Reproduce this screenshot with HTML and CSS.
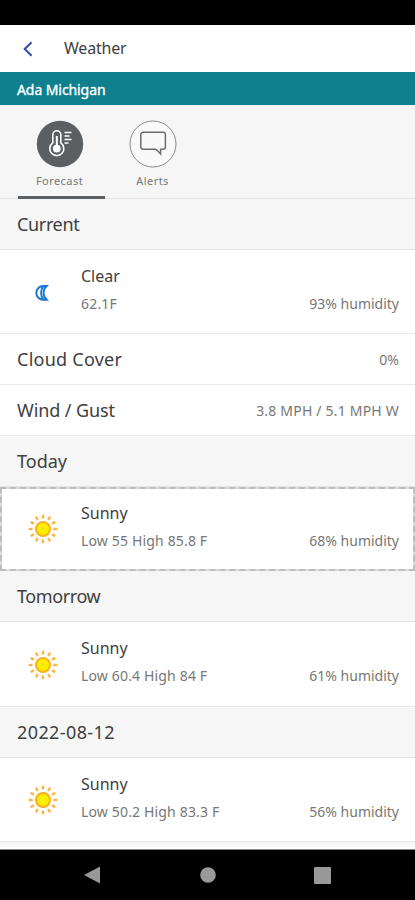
FILE: index.html
```html
<!DOCTYPE html>
<html lang="en">
<head>
<meta charset="utf-8">
<title>Weather</title>
<link rel="stylesheet" href="styles.css">
</head>
<body>
<svg class="defs" width="0" height="0">
  <symbol id="sun" viewBox="-15 -15 30 30">
    <g stroke="#fbb540" stroke-width="2.4">
      <path id="ray" d="M0-14.2V-10.4M0 14.2V10.4M-14.2 0H-10.4M14.2 0H10.4"/>
      <use href="#ray" transform="rotate(30)"/>
      <use href="#ray" transform="rotate(60)"/>
    </g>
    <circle r="7" fill="#ffee00" stroke="#fbb01c" stroke-width="2"/>
  </symbol>
</svg>
<div class="status"></div>
<header class="bar">
  <svg class="back" width="10" height="16" viewBox="0 0 10 16"><path d="M8.5 1.2L1.7 8L8.5 14.8" fill="none" stroke="#3449a8" stroke-width="2"/></svg>
  <h1 class="name">Weather</h1>
</header>
<div class="place"><span>Ada Michigan</span></div>
<nav class="tabs">
  <div class="tab active">
    <svg width="48" height="48" viewBox="0 0 48 48">
      <circle cx="24" cy="24" r="23.2" fill="#5b5f62"/>
      <g fill="none" stroke="#fff" stroke-width="1.6">
        <path d="M16.8 22.9V14.8a4 4 0 0 1 8 0V22.9a7 7 0 1 1-8 0Z"/>
        <path d="M20.8 16V27" stroke-width="2"/>
        <path d="M28.5 12.5H35.5M28.5 16H33.5M28.5 19.5H35.5M28.5 23H32.5" stroke-width="1.7"/>
      </g>
      <circle cx="20.8" cy="28.6" r="3.9" fill="#fff"/>
    </svg>
    <span class="label fc">Forecast</span>
  </div>
  <div class="tab">
    <svg width="48" height="48" viewBox="0 0 48 48">
      <circle cx="24" cy="24" r="23" fill="#f9f9f9" stroke="#85898b"/>
      <path d="M14 12.3H34.2a2.2 2.2 0 0 1 2.2 2.2V27a2.2 2.2 0 0 1-2.2 2.2H31.6V34L27 29.2H14a2.2 2.2 0 0 1-2.2-2.2V14.5a2.2 2.2 0 0 1 2.2-2.2Z" fill="none" stroke="#6b6e70" stroke-width="1.5"/>
    </svg>
    <span class="label al">Alerts</span>
  </div>
</nav>
<main>
  <h2 class="group"><span class="t-current">Current</span></h2>
  <section class="item">
    <svg class="icon" width="30" height="30" viewBox="-15 -15 30 30"><path d="M3.6-7H.2A6.9 6.9 0 0 0 .2 6.8H3.6C-.4 3.2-.4-3.4 3.6-7ZM.2-6.6C-2.6-3-2.6 2.8.2 6.4" fill="none" stroke="#1b76d1" stroke-width="1.9"/></svg>
    <div class="text"><b class="t-clear">Clear</b><p><span class="t-temp">62.1F</span><span class="hum">93% humidity</span></p></div>
  </section>
  <section class="line"><b class="t-cloud">Cloud Cover</b><span class="t-zero">0%</span></section>
  <section class="line"><b class="t-wind">Wind / Gust</b><span class="t-mph">3.8 MPH / 5.1 MPH W</span></section>
  <h2 class="group"><span class="t-today">Today</span></h2>
  <section class="item focus">
    <svg class="icon" width="30" height="30"><use href="#sun"/></svg>
    <div class="text"><b class="t-sunny">Sunny</b><p><span class="low">Low 55 High 85.8 F</span><span class="hum">68% humidity</span></p></div>
  </section>
  <h2 class="group"><span class="t-tom">Tomorrow</span></h2>
  <section class="item">
    <svg class="icon" width="30" height="30"><use href="#sun"/></svg>
    <div class="text"><b class="t-sunny">Sunny</b><p><span class="low">Low 60.4 High 84 F</span><span class="hum">61% humidity</span></p></div>
  </section>
  <h2 class="group"><span class="t-date">2022-08-12</span></h2>
  <section class="item">
    <svg class="icon" width="30" height="30"><use href="#sun"/></svg>
    <div class="text"><b class="t-sunny">Sunny</b><p><span class="low">Low 50.2 High 83.3 F</span><span class="hum">56% humidity</span></p></div>
  </section>
</main>
<footer class="sys">
  <svg width="17" height="18" viewBox="0 0 17 18"><path d="M0 9L16 .5V17.5Z" fill="#999"/></svg>
  <svg width="16" height="16" viewBox="0 0 16 16"><circle cx="8" cy="8" r="7.8" fill="#999"/></svg>
  <svg width="17" height="17" viewBox="0 0 17 17"><rect width="17" height="17" rx="1" fill="#999"/></svg>
</footer>
</body>
</html>
```
FILE: styles.css
```css
* { box-sizing: border-box; }
body {
  margin: 0; width: 415px; height: 900px; overflow: hidden;
  display: flex; flex-direction: column;
  background: #f6f6f6; color: #404040;
  font-family: "Noto Sans", sans-serif; white-space: nowrap;
}
h1, h2, p, b { margin: 0; font-weight: 400; }
.defs { position: absolute; }
.status { height: 25px; background: #000; }
.bar { height: 47px; background: #fff; display: flex; align-items: center; padding-left: 23px; }
.back { margin-top: 1px; }
.name { margin-left: 31px; font-size: 16px; line-height: 24px; letter-spacing: -.2px; margin-top: -2px; }
.place { height: 33px; background: #0f7f8d; color: #fff; padding: 0 17px; font-size: 14px; line-height: 35px; letter-spacing: -.08px; -webkit-text-stroke: .35px #fff; }
.tabs { height: 94px; padding: 15px 18px 0; display: flex; gap: 4px; border-bottom: 1px solid #e2e2e2; }
.tab { width: 87px; height: 79px; display: flex; flex-direction: column; align-items: center; border-bottom: 3px solid transparent; }
.tab.active { border-bottom-color: #5b5f62; padding-right: 4px; }
.tab svg { flex: none; }
.label { font-size: 11px; line-height: 16px; margin-top: 5px; color: #777; letter-spacing: .45px; }
.group { height: 51px; padding-left: 17px; font-size: 18px; line-height: 51px; border-bottom: 1px solid #e2e2e2; }
.item { height: 84.4px; display: flex; background: #fff; border-bottom: 1px solid #e9e9e9; padding: 0 16px 0 28px; }
.item.focus { border: 0; outline: 2px dashed #bdbdbd; outline-offset: -2px; box-shadow: inset 0 0 0 2px #dadada; }
.icon { margin-top: 27.5px; margin-left: -.3px; flex: none; }
.text { flex: 1; margin-left: 23.3px; padding-top: 13px; }
.text b { display: block; font-size: 16px; line-height: 26px; }
.text p { display: flex; justify-content: space-between; font-size: 14px; line-height: 28px; color: #777; margin-top: 1px; }
.low { letter-spacing: .16px; }
.t-temp { letter-spacing: .2px; }
.t-current { letter-spacing: -.35px; }
.t-tom { letter-spacing: -.4px; }
.t-date { letter-spacing: .4px; }
.line { height: 50.7px; display: flex; justify-content: space-between; align-items: center; background: #fff; border-bottom: 1px solid #e9e9e9; padding: 0 16px 0 17px; }
.line b { font-size: 18px; }
.line .t-cloud { letter-spacing: .25px; }
.line .t-wind { letter-spacing: -.1px; }
.line span { font-size: 14px; color: #777; padding-top: 1px; }
.line .t-mph { letter-spacing: .2px; }
.sys { position: absolute; top: 850px; left: 0; width: 415px; height: 50px; background: #000; box-shadow: 0 -1px #888, 0 -3px #fff; display: flex; align-items: center; justify-content: space-between; padding: 0 84px; }
```
